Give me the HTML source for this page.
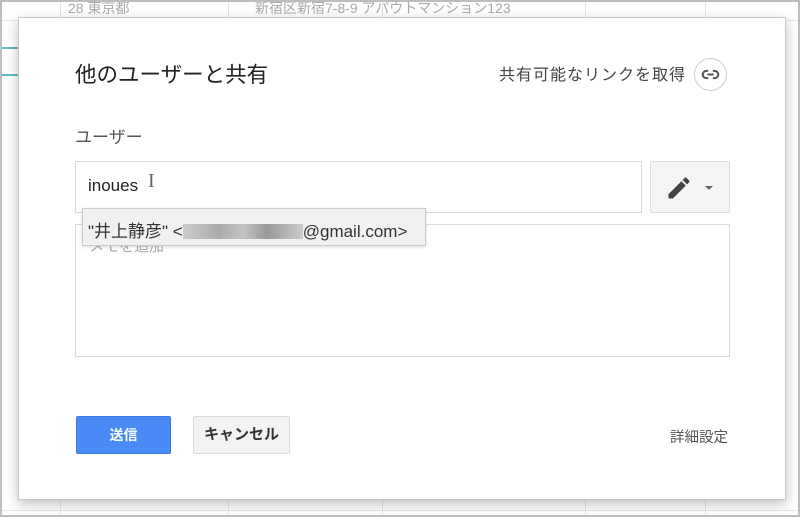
<!DOCTYPE html>
<html><head><meta charset="utf-8"><style>
*{margin:0;padding:0;box-sizing:border-box}
body{width:800px;height:517px;overflow:hidden;background:#fff;font-family:"Liberation Sans","Noto Sans CJK JP",sans-serif;position:relative}
.frame{position:absolute;inset:0;border:2px solid #bdbdbd}
.bg{position:absolute;color:#aaa;font-size:14px}
.vl{position:absolute;top:0;bottom:0;width:1px;background:#e6e6e6}
.hl{position:absolute;left:0;right:0;height:1px;background:#e6e6e6}
.dlg{position:absolute;left:18px;top:17px;width:768px;height:483px;background:#fff;border:1px solid #c8c8c8;box-shadow:0 4px 12px rgba(0,0,0,.25)}
.abs{position:absolute}
</style></head><body>
<div class="vl" style="left:60px"></div><div class="vl" style="left:228px"></div><div class="vl" style="left:382px"></div><div class="vl" style="left:585px"></div><div class="vl" style="left:705px"></div>
<div class="hl" style="top:20px"></div><div class="hl" style="top:510px"></div>
<div class="abs" style="left:0;top:47px;width:18px;height:2px;background:#5bbfc9"></div>
<div class="abs" style="left:0;top:74px;width:18px;height:2px;background:#5bbfc9"></div>
<div class="bg" style="left:68px;top:-2px">28 東京都</div>
<div class="bg" style="left:255px;top:-2px">新宿区新宿7-8-9 アパウトマンション123</div>
<div class="dlg">
 <div class="abs" style="left:56px;top:40px;font-size:21.5px;color:#222">他のユーザーと共有</div>
 <div class="abs" style="left:480px;top:43px;font-size:16px;letter-spacing:1px;color:#444">共有可能なリンクを取得</div>
 <div class="abs" style="left:675px;top:40px;width:33px;height:33px;border:1px solid #ccc;border-radius:50%">
  <svg width="31" height="31" viewBox="0 0 30 30"><rect x="7.5" y="11.5" width="15" height="7" rx="3.5" fill="none" stroke="#555" stroke-width="2"/><line x1="14" y1="10" x2="14" y2="20" stroke="#fff" stroke-width="2.5"/><line x1="16" y1="10" x2="16" y2="20" stroke="#fff" stroke-width="2.5"/><line x1="12" y1="15" x2="18" y2="15" stroke="#555" stroke-width="2"/></svg>
 </div>
 <div class="abs" style="left:56px;top:105px;font-size:17px;color:#555">ユーザー</div>
 <div class="abs" style="left:56px;top:143px;width:567px;height:52px;border:1px solid #d9d9d9"></div>
 <div class="abs" style="left:69px;top:158px;font-size:17px;color:#222">inoues</div>
 <div class="abs" style="left:129px;top:152px;font-size:20px;color:#666;font-family:'Liberation Serif',serif">I</div>
 <div class="abs" style="left:631px;top:143px;width:80px;height:52px;border:1px solid #ddd;background:#f5f5f5;border-radius:2px">
  <svg class="abs" style="left:14px;top:12px" width="28" height="28" viewBox="0 0 24 24"><path d="M3 17.25V21h3.75L17.81 9.94l-3.75-3.75L3 17.25zM20.71 7.04a1 1 0 000-1.410l-2.34-2.34a1 1 0 00-1.41 0l-1.83 1.83 3.75 3.75 1.83-1.83z" fill="#444"/></svg>
  <div class="abs" style="left:54px;top:24px;width:0;height:0;border-left:4px solid transparent;border-right:4px solid transparent;border-top:4px solid #666"></div>
 </div>
 <div class="abs" style="left:56px;top:206px;width:655px;height:133px;border:1px solid #d9d9d9"></div>
 <div class="abs" style="left:70px;top:217px;font-size:15px;color:#aaa">メモを追加</div>
 <div class="abs" style="left:63px;top:190px;width:344px;height:38px;background:#f1f1f1;border:1px solid #ccc;box-shadow:0 1px 3px rgba(0,0,0,.15)">
  <div class="abs" style="left:5px;top:8px;font-size:17px;color:#333;white-space:nowrap">"井上静彦" &lt;<span style="display:inline-block;width:120px;height:15px;background:linear-gradient(90deg,#ccc,#aaa 30%,#c4c4c4 50%,#999 70%,#ccc);vertical-align:-2px"></span>@gmail.com&gt;</div>
 </div>
 <div class="abs" style="left:57px;top:398px;width:95px;height:38px;background:#4a8af4;border:1px solid #3b7be0;border-radius:2px;color:#fff;font-size:14px;font-weight:bold;text-align:center;line-height:36px">送信</div>
 <div class="abs" style="left:174px;top:398px;width:97px;height:38px;background:#f3f3f3;border:1px solid #d9d9d9;border-radius:2px;color:#333;font-size:15px;font-weight:bold;text-align:center;line-height:36px">キャンセル</div>
 <div class="abs" style="left:651px;top:408px;font-size:14.5px;color:#555">詳細設定</div>
</div>
<div class="frame"></div>
</body></html>
